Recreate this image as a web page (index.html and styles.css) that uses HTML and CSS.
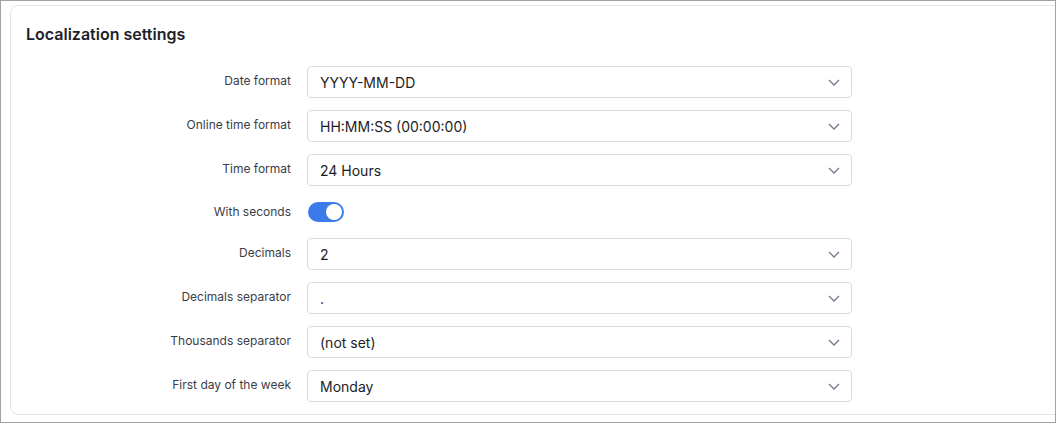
FILE: index.html
```html
<!DOCTYPE html>
<html>
<head>
<meta charset="utf-8">
<link rel="stylesheet" href="styles.css">
</head>
<body>
<div class="frame">
  <div class="card">
    <h2 class="title">Localization settings</h2>
    <div class="form">
      <div class="row">
        <label class="label">Date format</label>
        <div class="select"><span>YYYY-MM-DD</span><svg class="chev" viewBox="0 0 12 7"><path d="M1 1l5 5 5-5"/></svg></div>
      </div>
      <div class="row">
        <label class="label">Online time format</label>
        <div class="select"><span>HH:MM:SS (00:00:00)</span><svg class="chev" viewBox="0 0 12 7"><path d="M1 1l5 5 5-5"/></svg></div>
      </div>
      <div class="row">
        <label class="label">Time format</label>
        <div class="select"><span>24 Hours</span><svg class="chev" viewBox="0 0 12 7"><path d="M1 1l5 5 5-5"/></svg></div>
      </div>
      <div class="row row-toggle">
        <label class="label">With seconds</label>
        <div class="toggle"><span class="knob"></span></div>
      </div>
      <div class="row">
        <label class="label">Decimals</label>
        <div class="select"><span>2</span><svg class="chev" viewBox="0 0 12 7"><path d="M1 1l5 5 5-5"/></svg></div>
      </div>
      <div class="row">
        <label class="label">Decimals separator</label>
        <div class="select"><span>.</span><svg class="chev" viewBox="0 0 12 7"><path d="M1 1l5 5 5-5"/></svg></div>
      </div>
      <div class="row">
        <label class="label">Thousands separator</label>
        <div class="select"><span>(not set)</span><svg class="chev" viewBox="0 0 12 7"><path d="M1 1l5 5 5-5"/></svg></div>
      </div>
      <div class="row">
        <label class="label">First day of the week</label>
        <div class="select"><span>Monday</span><svg class="chev" viewBox="0 0 12 7"><path d="M1 1l5 5 5-5"/></svg></div>
      </div>
    </div>
  </div>
</div>
</body>
</html>
```
FILE: styles.css
```css
html, body {
  margin: 0;
  padding: 0;
  background: #ffffff;
}
body {
  font-family: Inter, "Noto Sans", sans-serif;
}
.frame {
  border: 1px solid #a3a3a3;
  overflow: hidden;
  padding: 4px 0 0 9px;
  box-sizing: content-box;
  width: 1045px;
  height: 417px;
}
.card {
  width: 1100px;
  height: 410px;
  border: 1px solid #e3e5ea;
  border-radius: 8px;
  box-sizing: border-box;
  padding: 18px 0 0 15px;
}
.title {
  margin: 0;
  font-size: 16px;
  font-weight: 600;
  color: #1e2129;
  line-height: 20px;
}
.form {
  margin-top: 22px;
  display: flex;
  flex-direction: column;
  gap: 12px;
}
.row {
  display: grid;
  grid-template-columns: 265px 545px;
  column-gap: 16px;
  align-items: start;
}
.row-toggle {
  height: 28px;
  align-items: center;
}
.label {
  text-align: right;
  font-size: 12px;
  line-height: 16px;
  color: #3a3d48;
  padding-top: 7px;
}
.row-toggle .label {
  padding-top: 0;
}
.select {
  height: 32px;
  box-sizing: border-box;
  border: 1px solid #d6d9df;
  border-radius: 4px;
  display: flex;
  align-items: center;
  justify-content: space-between;
  padding: 0 11px 0 12px;
  font-size: 14px;
  color: #1c1e26;
}
.chev {
  width: 12px;
  height: 7px;
  fill: none;
  stroke: #6e7a8c;
  stroke-width: 1.3;
}
.toggle {
  width: 36px;
  height: 20px;
  border-radius: 10px;
  background: #3a7be9;
  position: relative;
  margin-left: 1px;
}
.knob {
  position: absolute;
  right: 2px;
  top: 2px;
  width: 16px;
  height: 16px;
  border-radius: 50%;
  background: #ffffff;
}
```
